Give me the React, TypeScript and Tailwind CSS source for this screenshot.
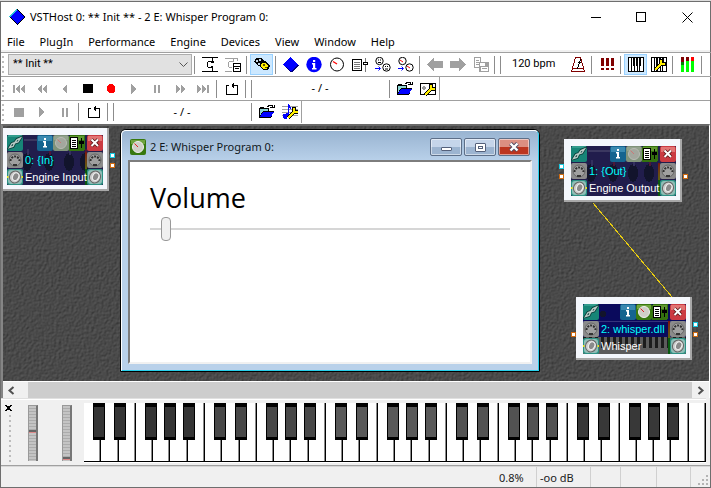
import React from "react";

type Kids = { children?: React.ReactNode };

/* ---------- pixel icons, 16 x 16 ---------- */

function Px({ children, smooth = false }: Kids & { smooth?: boolean }) {
  return (
    <svg
      width="16"
      height="16"
      viewBox="0 0 16 16"
      fill="none"
      stroke="none"
      shapeRendering={smooth ? "auto" : "crispEdges"}
      aria-hidden="true"
      className="block shrink-0"
    >
      {children}
    </svg>
  );
}

const GREY = "#a0a0a0";

const Diamond = () => (
  <Px>
    <path d="M8 0L16 8L8 16L0 8Z" fill="#000" />
    <path d="M8 1L15 8L8 15L1 8Z" fill="#0000ff" />
    <path d="M8 .5L.5 8" stroke="#27c4d8" />
  </Px>
);

const ToolDiamond = () => (
  <Px>
    <path d="M8 1L16 8L9 15H8L0 8Z" fill="#000080" />
    <path d="M8 0L15 7.500L8 14L0 7.500Z" fill="#0000ff" />
  </Px>
);

const Plug = () => (
  <Px>
    <path d="M0 .5H16M0 14.500H16M10.500 0V5M10.500 10V15M6 4.500H10M5.500 5V10M6 10.500H10M11.500 4V6M9 5.500H12M9 9.500H11" stroke="#000" />
  </Px>
);

const PlugCard = () => (
  <Px>
    <path d="M0 1.500H12M0 14.500H7M8.500 1V4M4 4.500H9M3.500 5V10M4 10.500H7M12.500 1V4" stroke={GREY} />
    <path d="M8 6H16V15H8Z" fill="#000" />
    <path d="M9 7H15V9H9ZM9 10H15V14H9Z" fill="#fff" />
    <path d="M10 11H14V12H10Z" fill="#000" />
  </Px>
);

const Engine = () => (
  <Px>
    <path d="M2 1H7L10 4L8 8L4 9L0 5Z" fill="#000" />
    <path d="M2 3H4V5H2ZM5 2H7V4H5ZM4 6H6V8H4Z" fill="#c8dcee" />
    <path d="M8 4H12L16 9L14 13H9L5 9Z" fill="#000" />
    <path d="M8 6H11L14 9L13 12H9L7 9Z" fill="#ffee00" />
    <path d="M9 7H11V9H9ZM11 10H13V11H11Z" fill="#5a5200" />
  </Px>
);

const Info = () => (
  <Px smooth>
    <circle cx="8" cy="7.500" r="7.700" fill="#0000ff" />
    <path d="M7 3H9.200V5H7ZM6 6H9.200V11H10.500V12.500H6V11H7V7.500H6Z" fill="#fff" />
  </Px>
);

const Dial = () => (
  <Px smooth>
    <circle cx="8" cy="7.500" r="6.500" fill="#fff" stroke="#000" />
    <path d="M4 4.500L8 7" stroke="#ff0000" strokeWidth="1.300" />
  </Px>
);

const ListSlider = () => (
  <Px>
    <path d="M.5 2.500H9.500V13.500H.5Z" fill="#fff" stroke="#000" />
    <path d="M2 5.500H8M2 7.500H8M2 9.500H8M2 11.500H8" stroke="#777" />
    <path d="M13.500 1V15" stroke="#777" />
    <path d="M11 5H16V8H11Z" fill="#000" />
    <path d="M12 6H15V7H12Z" fill="#fff" />
  </Px>
);

const Midi = ({ red = false }: { red?: boolean }) => (
  <Px smooth>
    <circle cx="4.500" cy="4" r="3.700" fill="#fff" stroke="#000" />
    <circle cx="11.500" cy="10.500" r="3.700" fill="#fff" stroke="#000" />
    {red ? (
      <path d="M2 3L5 5M9 9L12 11" stroke="#f00" />
    ) : (
      <path d="M3 3H4M5 3H6M3 5.500H6M10 9.500H11M12 9.500H13M10 12H13" stroke="#000" />
    )}
    <path d="M0 11.500H5M3.500 9.500L5.500 11.500L3.500 13.500" stroke="#0000ff" />
  </Px>
);

const Arrow = ({ right = false }: { right?: boolean }) => (
  <Px>
    <path
      d={right ? "M16 7.500L9 0V4H0V11H9V15Z" : "M0 7.500L7 0V4H16V11H7V15Z"}
      fill={GREY}
    />
  </Px>
);

const Copy = () => (
  <Px>
    <path d="M1.500 .5H7.500V10.500H1.500ZM3 3.500H6M3 5.500H6M3 7.500H6" stroke={GREY} />
    <path d="M6 5H16V15H6Z" fill={GREY} />
    <path d="M7 6H12V9H7ZM8 10H15V14H8Z" fill="#fff" />
    <path d="M9 11.500H14" stroke={GREY} />
  </Px>
);

const Metronome = () => (
  <Px>
    <path d="M5.500 .5H10.500L14.500 14.500H1.500ZM2 11.500H14" stroke="#800000" />
    <path d="M10.500 2L7.500 12M8 5H11" stroke="#000" />
  </Px>
);

const Panic = () => (
  <Px>
    <path d="M2 1H5V9H2ZM7 1H10V9H7ZM12 1H15V9H12ZM2 11H5V13H2ZM7 11H10V13H7ZM12 11H15V13H12Z" fill="#800000" />
  </Px>
);

const Wrench = ({ move }: { move?: string }) => (
  <g transform={move}>
    <path d="M4 13L10 7M10 2V7H15" stroke="#000" strokeWidth="4" />
    <path d="M4 13L10 7M10 3V7H14" stroke="#ffee00" strokeWidth="2" />
  </g>
);

const Keys = ({ wrench = false }: { wrench?: boolean }) => (
  <Px>
    <path d="M0 0H16V15H0Z" fill="#000" />
    <path d="M1 1H3V14H1ZM4 9H6V14H4ZM4 1H5V9H4ZM7 1H8V9H7ZM7 9H9V14H7ZM10 1H11V14H10ZM12 9H13V14H12ZM13 1H15V14H13Z" fill="#fff" />
    {wrench && <Wrench />}
  </Px>
);

const Meters = () => (
  <Px>
    <path d="M1 0H4V5H1ZM6 0H9V4H6Z" fill="#800000" />
    <path d="M11 0H14V4H11Z" fill="#ff0000" />
    <path d="M1 5H4V8H1Z" fill="#008000" />
    <path d="M1 8H4V15H1ZM6 4H9V15H6ZM11 4H14V15H11Z" fill="#00ff00" />
  </Px>
);

const Shape = ({ d, fill = GREY }: { d: string; fill?: string }) => (
  <Px>
    <path d={d} fill={fill} />
  </Px>
);

const Loop = () => (
  <Px>
    <path d="M5 4.500H2.500V13.500H13.500V4.500H8M9.500 2V7M8.500 3V6" stroke="#000" />
  </Px>
);

const Folder = () => (
  <Px>
    <path d="M0 14V4H1V3H5V4H10V7H15L12 14Z" fill="#000" />
    <path d="M1 12V5H9V7H4Z" fill="#8fd6d6" />
    <path d="M4 8H15L12 13H1Z" fill="#0000ff" />
    <path d="M8 2.500H9V1.500H13V3.500M11 3.500H15V1" stroke="#000" />
  </Px>
);

const PanelWrench = () => (
  <Px>
    <path d="M.5 2.500H15.500V13.500H.5Z" fill="#fff" stroke="#000" />
    <path d="M2 6H6V8H2ZM3 5H5V9H3Z" fill="#999" />
    <Wrench move="translate(1 1)" />
  </Px>
);

const NoteWrench = () => (
  <Px>
    <path d="M0 2.500H16M0 5.500H16M0 8.500H16M0 11.500H16" stroke={GREY} />
    <path d="M6 0H7L9 4V6L7 4V13H5V15H2V14H1V10H4V9H6Z" fill="#0000ff" />
    <Wrench move="translate(2 1)" />
  </Px>
);

/* ---------- toolbar parts ---------- */

function Tool({ label, on = false, children }: Kids & { label: string; on?: boolean }) {
  return (
    <button
      type="button"
      aria-label={label}
      className={
        on
          ? "flex h-[21px] w-[23px] shrink-0 items-center justify-center border border-[#99d1ff] bg-[#cce8ff]"
          : "flex h-[21px] w-[23px] shrink-0 items-center justify-center"
      }
    >
      {children}
    </button>
  );
}

const Sep = () => <span className="mr-[3px] ml-0.5 h-[18px] w-px shrink-0 bg-[#8c8c8c]" />;

function Grip({ count, tall = false }: { count: number; tall?: boolean }) {
  return (
    <span className={tall ? "flex flex-col gap-[3px]" : "mr-0.5 flex w-[3px] shrink-0 flex-col gap-[3px]"}>
      {Array.from({ length: count }, (_, i) => (
        <i key={i} className="size-0.5 bg-[#bdbdbd]" />
      ))}
    </span>
  );
}

const bar = "flex h-6 w-full items-center overflow-hidden border-b border-[#a0a0a0] pl-px";
const uiText = "font-['Noto_Sans','Open_Sans',sans-serif]";
const barText = "font-['Roboto',sans-serif]";

/* ---------- engine nodes ---------- */

const Link = () => (
  <Px smooth>
    <rect width="16" height="16" rx="2" fill="#178577" />
    <path d="M1 1H15" stroke="#4fb3a3" />
    <path d="M2.500 12.500L5 8.500L8 7.500L6 11.500ZM7.500 8L10 4.500L13.500 3L11 7Z" stroke="#083d38" strokeWidth="3" />
    <path d="M2.500 12.500L5 8.500L8 7.500L6 11.500ZM7.500 8L10 4.500L13.500 3L11 7Z" stroke="#b9cbc7" strokeWidth="1.400" />
  </Px>
);

const NodeInfo = () => (
  <Px smooth>
    <rect width="16" height="16" rx="2" fill="#14648f" />
    <path d="M1 1H15V6H1Z" fill="#3989b0" />
    <path d="M7 3H9V5H7ZM6 6H9V11H10V12.500H6V11H7V7.500H6Z" fill="#fff" />
  </Px>
);

const NodeDial = ({ lit = false }: { lit?: boolean }) => (
  <Px smooth>
    <rect width="16" height="16" rx="2" fill={lit ? "#37780e" : "#7f927a"} />
    <path d="M1 1H15V5H1Z" fill={lit ? "#6fa33f" : "#93a38e"} />
    <circle cx="8" cy="8" r="5.500" fill={lit ? "#cfcfc6" : "#a3a79e"} stroke={lit ? "#f0f0f0" : "#b8bcb4"} />
    <path d="M4.500 4.500L8 8" stroke={lit ? "#e02020" : "#c77"} />
  </Px>
);

const NodeList = () => (
  <Px>
    <rect width="16" height="16" rx="2" fill="#34720f" />
    <path d="M1 1H15V5H1Z" fill="#5f9830" />
    <path d="M1.500 2.500H8.500V13.500H1.500Z" fill="#fff" stroke="#000" />
    <path d="M3 5.500H7M3 7.500H7M3 9.500H7M3 11.500H7" stroke="#000" />
    <path d="M12.500 3V13" stroke="#000" />
    <path d="M10 6H15V9H10Z" fill="#000" />
  </Px>
);

const NodeClose = () => (
  <Px smooth>
    <rect width="16" height="16" rx="2" fill="#cb3b42" />
    <path d="M1 1H15V6H1Z" fill="#e27474" />
    <path d="M4.500 4.500L11 11M11 4.500L4.500 11" stroke="#501010" strokeWidth="3.500" />
    <path d="M4.500 4.500L11 11M11 4.500L4.500 11" stroke="#fff" strokeWidth="2" />
  </Px>
);

const Socket = () => (
  <Px smooth>
    <rect width="16" height="16" rx="2" fill="#8b8b8b" />
    <circle cx="8" cy="8" r="6" fill="#a0a0a0" stroke="#666" />
    <path d="M3.500 9A4.500 4.500 0 0 1 12.500 9" stroke="#303030" strokeWidth="2" strokeDasharray="2 1" />
    <path d="M6 13H10" stroke="#333" strokeWidth="2" />
  </Px>
);

const Speaker = ({ left = false }: { left?: boolean }) => (
  <Px smooth>
    <rect width="16" height="16" rx="2" fill="#2c9184" />
    <rect x="1" y="1" width="14" height="14" rx="3" fill="#8fbdb6" />
    <ellipse cx="8" cy="8" rx="5.500" ry="6" transform="rotate(25 8 8)" fill="#cdcdcd" stroke="#666" />
    <ellipse cx="8.500" cy="7.500" rx="3" ry="4" transform="rotate(25 8 8)" fill="#8a8a8a" stroke="#f2f2f2" />
    {left && <path d="M0 7H1.500V9H0ZM14.500 7H16V9H14.500Z" fill="#e8e020" />}
  </Px>
);

const Backdrop = ({ piano = false }: { piano?: boolean }) => (
  <svg className="absolute inset-0 size-full" aria-hidden="true" shapeRendering="crispEdges">
    <rect width="100%" height="100%" fill={piano ? "#0a0a5c" : "#211d4c"} />
    {[20, 42, 62, 78].map((x, i) => (
      <g key={x}>
        <ellipse cx={x} cy={piano ? 10 : 27} rx={piano ? 3 : 5} ry={piano ? 3 : 9} fill="#12142c" />
        {!piano && <rect x={x} y="14" width="2" height="6" fill={i % 2 ? "#4d1838" : "#34305e"} />}
      </g>
    ))}
    {piano ? (
      <g>
        <rect y="17" width="100%" height="1" fill="#34347c" />
        <rect y="33" width="100%" height="17" fill="#5c5c5c" />
        {Array.from({ length: 18 }, (_, i) => (
          <rect key={i} x={i * 6} y="33" width="3" height="11" fill="#1c1c1c" />
        ))}
      </g>
    ) : (
      <rect x="17" y="4" width="22" height="2" fill="#3b3860" />
    )}
  </svg>
);

type NodeProps = { title: string; name: string; place: string; piano?: boolean };

function EngineNode({ title, name, place, piano = false }: NodeProps) {
  return (
    <section
      className={`absolute h-[63px] border-r-2 border-b-2 border-[#a8a8a8] bg-[#f4f7fc] pt-[7px] pr-1 pb-1 ${place}`}
    >
      <div className="relative h-[50px] overflow-hidden">
        <Backdrop piano={piano} />
        <div className="relative flex flex-col gap-px">
          <div className="flex">
            <button type="button" aria-label="Link" className="mr-auto"><Link /></button>
            <button type="button" aria-label="Information"><NodeInfo /></button>
            <button type="button" aria-label="Editor"><NodeDial lit={piano} /></button>
            <button type="button" aria-label="Parameters" className="mr-0.5"><NodeList /></button>
            <button type="button" aria-label="Remove"><NodeClose /></button>
          </div>
          {[title, name].map((text, row) => (
            <div key={text} className="flex h-4 items-center">
              {row ? <Speaker left /> : <Socket />}
              <span
                className={`z-10 min-w-0 flex-1 pl-0.5 font-['Liberation_Sans',Arial,sans-serif] text-[11px] leading-4 whitespace-nowrap ${
                  row ? "text-white" : "text-[#00ffff]"
                }`}
              >
                {text}
              </span>
              <i
                className={`h-[17px] w-0.5 shrink-0 ${
                  row ? "bg-[#0a5a10]" : "bg-linear-to-b from-[#7a1010] to-[#5a6010]"
                }`}
              />
              {row ? <Speaker /> : <Socket />}
            </div>
          ))}
        </div>
      </div>
    </section>
  );
}

const Pin = ({ place, audio = false }: { place: string; audio?: boolean }) => (
  <i
    className={`absolute size-[5px] border bg-white ${
      audio ? "border-[#d06a10]" : "border-[#18c8e0]"
    } ${place}`}
  />
);

/* ---------- plug-in editor window ---------- */

const caption =
  "flex h-[18px] w-8 items-center justify-center rounded-xs border border-[#5d6f88] inset-ring inset-ring-white/50";

function EditorWindow() {
  return (
    <section className="absolute top-[3px] left-[117px] flex h-[243px] w-[420px] flex-col rounded-t-md border border-black bg-[#b9d1ea]">
      <div className="flex flex-1 flex-col rounded-t-[5px] border border-t-white border-r-[#28d0ec] border-b-[#28d0ec] border-l-white bg-linear-to-b from-[#99b4d1] to-[#b9d1ea] to-[30px] px-1.5 pb-1.5">
        <header className="flex h-[29px] items-center gap-1 px-0.5 pt-[3px]">
          <NodeDial lit />
          <h2 className={`flex-1 text-[11px] ${uiText} text-[#101820]`}>2 E: Whisper Program 0:</h2>
          <div className="flex gap-0.5">
            <button type="button" aria-label="Minimize" className={`${caption} bg-linear-to-b from-[#c5d5ea] from-50% to-[#9cb4d0] to-50%`}>
              <i className="mt-1 h-1 w-[11px] rounded-[1px] border border-[#54607a] bg-white" />
            </button>
            <button type="button" aria-label="Maximize" className={`${caption} bg-linear-to-b from-[#c5d5ea] from-50% to-[#9cb4d0] to-50%`}>
              <i className="flex h-[9px] w-[11px] items-center justify-center rounded-[1px] border border-[#54607a] bg-white">
                <i className="h-[3px] w-[5px] border border-[#54607a]" />
              </i>
            </button>
            <button type="button" aria-label="Close" className={`${caption} border-[#4a1018] bg-linear-to-b from-[#dc8f82] from-50% to-[#bc3520] to-50%`}>
              <svg width="12" height="10" viewBox="0 0 12 10" aria-hidden="true">
                <path d="M2.500 1.500L9.500 8.500M9.500 1.500L2.500 8.500" stroke="#4c4a62" strokeWidth="4" />
                <path d="M2.500 1.500L9.500 8.500M9.500 1.500L2.500 8.500" stroke="#fff" strokeWidth="2.400" />
              </svg>
            </button>
          </div>
        </header>
        <div className="flex-1 border-2 border-t-[#7d7d7d] border-r-[#f1f1f1] border-b-[#f1f1f1] border-l-[#7d7d7d] bg-white px-5 pt-[18px]">
          <label htmlFor="volume" className="block font-['Open_Sans','Noto_Sans',sans-serif] text-[27px] leading-9 text-black">
            Volume
          </label>
          <input
            id="volume"
            type="range"
            defaultValue={3}
            className="mt-px block h-6 w-full appearance-none bg-transparent [&::-webkit-slider-runnable-track]:h-0.5 [&::-webkit-slider-runnable-track]:bg-[#d6d6d6] [&::-webkit-slider-thumb]:-mt-[11px] [&::-webkit-slider-thumb]:h-6 [&::-webkit-slider-thumb]:w-2.5 [&::-webkit-slider-thumb]:appearance-none [&::-webkit-slider-thumb]:rounded [&::-webkit-slider-thumb]:border [&::-webkit-slider-thumb]:border-[#999] [&::-webkit-slider-thumb]:bg-[#f0f0f0]"
          />
        </div>
      </div>
    </section>
  );
}

/* ---------- keyboard ---------- */

const blackPlaces = ["left-[7.5%]", "left-[24.8%]", "left-[50.4%]", "left-[66.1%]", "left-[81.8%]"];
const blackTones = ["bg-[#353535]", "bg-[#484848]", "bg-[#595959]", "bg-[#525252]", "bg-[#383838]"];

const White = () => (
  <button
    type="button"
    aria-label="White key"
    className="h-[59px] flex-1 border-r border-b border-black bg-white shadow-[inset_-1px_0_#8a8a8a]"
  />
);

function Piano() {
  return (
    <div className="flex h-[60px] flex-1 bg-white">
      {blackTones.map((tone, o) => (
        <div key={o} className="relative flex flex-[7]">
          {Array.from({ length: 7 }, (_, k) => <White key={k} />)}
          {blackPlaces.map((place) => (
            <button
              key={place}
              type="button"
              aria-label="Black key"
              className={`absolute top-0 h-[37px] w-3 border-x border-t-4 border-b-3 border-black ${place} ${tone}`}
            />
          ))}
        </div>
      ))}
      <div className="flex flex-1"><White /></div>
    </div>
  );
}

const Wheel = ({ low = false }: { low?: boolean }) => (
  <span className="h-14 w-2.5 border-t border-r-2 border-l border-[#999] border-r-[#777] bg-[repeating-linear-gradient(#c4c4c4_0_2px,#acacac_2px_3px)]">
    <i className={`block h-[3px] border-b border-[#d88] bg-[#666] ${low ? "mt-[51px]" : "mt-6"}`} />
  </span>
);

/* ---------- application ---------- */

const menus = ["File", "PlugIn", "Performance", "Engine", "Devices", "View", "Window", "Help"];

const transport: [string, string, string?][] = [
  ["First", "M2 4H4V12H2ZM9 4V12L4 8ZM14 4V12L9 8Z"],
  ["Rewind", "M8 4V12L3 8ZM13 4V12L8 8Z"],
  ["Back", "M10 4V12L5 8Z"],
  ["Stop", "M3 3H13V12H3Z", "#000"],
  ["Record", "M6 3H10L12 6V10L10 12H6L4 10V6Z", "#ff0000"],
  ["Play", "M5 3V13L11 8Z"],
  ["Pause", "M5 4H7V12H5ZM9 4H11V12H9Z"],
  ["Forward", "M4 4V12L9 8ZM9 4V12L14 8Z"],
  ["Last", "M2 4V12L7 8ZM7 4V12L12 8ZM12 4H14V12H12Z"],
];

export default function App() {
  return (
    <main className={`flex h-screen min-h-[420px] flex-col overflow-hidden border-t border-[#dcdcdc] text-[11px] text-black ${uiText}`}>
      <div className="flex min-h-0 flex-1 flex-col border border-[#6e6e6e] bg-[#f0f0f0]">
        <header className="flex h-[30px] shrink-0 items-center bg-white pl-2">
          <Diamond />
          <h1 className="ml-[5px] flex-1 whitespace-nowrap">VSTHost 0: ** Init ** - 2 E: Whisper Program 0:</h1>
          {["M.5 5.500H10.500", "M.5 .5H9.500V9.500H.5Z", "M.5 .5L10.500 10.500M10.500 .5L.5 10.500"].map((d, i) => (
            <button key={d} type="button" aria-label={["Minimize", "Maximize", "Close"][i]} className="flex h-full w-[46px] items-center justify-center">
              <svg width="11" height="11" viewBox="0 0 11 11" fill="none" stroke="#000" shapeRendering={i < 2 ? "crispEdges" : "auto"} aria-hidden="true">
                <path d={d} />
              </svg>
            </button>
          ))}
        </header>
        <nav className="flex h-[18px] shrink-0 items-center gap-[15px] bg-white pt-0.5 pl-1.5">
          {menus.map((m) => <button key={m} type="button">{m}</button>)}
        </nav>
        <div className="shrink-0 border-t-2 border-[#f0f0f0] bg-white pb-px">
          <div className={`${bar} box-content h-[23px] border-t`}>
            <Grip count={4} />
            <div className="relative ml-px h-[21px] w-[184px] shrink-0">
              <select aria-label="Performance" className={`h-full w-full appearance-none border border-[#adadad] bg-[#e1e1e1] pl-1 text-[11px] ${barText}`}>
                <option>** Init **</option>
              </select>
              <svg className="pointer-events-none absolute top-2 right-1" width="9" height="6" viewBox="0 0 9 6" fill="none" aria-hidden="true">
                <path d="M.5 .5L4.500 4.500L8.500 .5" stroke="#555" />
              </svg>
            </div>
            <Sep />
            <Tool label="Load plug-in"><Plug /></Tool>
            <Tool label="Plug-in window"><PlugCard /></Tool>
            <Sep />
            <Tool label="Engine running" on><Engine /></Tool>
            <Sep />
            <Tool label="Plug-in"><ToolDiamond /></Tool>
            <Tool label="Information"><Info /></Tool>
            <Tool label="Edit"><Dial /></Tool>
            <Tool label="Parameters"><ListSlider /></Tool>
            <Tool label="MIDI devices"><Midi /></Tool>
            <Tool label="MIDI parameters"><Midi red /></Tool>
            <Sep />
            <Tool label="Previous"><Arrow /></Tool>
            <Tool label="Next"><Arrow right /></Tool>
            <Tool label="Copy"><Copy /></Tool>
            <Sep />
            <Sep />
            <span className={`w-[62px] shrink-0 pl-2 whitespace-nowrap ${barText}`}>120 bpm</span>
            <Tool label="Metronome"><Metronome /></Tool>
            <Sep />
            <Tool label="Panic"><Panic /></Tool>
            <Sep />
            <Tool label="Keyboard" on><Keys /></Tool>
            <Tool label="Keyboard settings"><Keys wrench /></Tool>
            <Sep />
            <Tool label="Levels"><Meters /></Tool>
            <Sep />
          </div>
          <div className={bar}>
            <Grip count={4} />
            {transport.map(([label, d, fill]) => (
              <Tool key={label} label={label}><Shape d={d} fill={fill} /></Tool>
            ))}
            <Sep />
            <Tool label="Loop"><Loop /></Tool>
            <Sep />
            <Sep />
            <span className={`w-[132px] shrink-0 pr-0.5 text-center`}>- / -</span>
            <Sep />
            <Tool label="Open recording"><Folder /></Tool>
            <Tool label="Recorder settings"><PanelWrench /></Tool>
            <span className="h-full w-px shrink-0 bg-[#a0a0a0]" />
          </div>
          <div className="flex h-[22px] items-center pl-px">
            <Grip count={4} />
            <Tool label="Stop"><Shape d="M3 4H13V13H3Z" /></Tool>
            <Tool label="Play"><Shape d="M5 3V13L11 8Z" /></Tool>
            <Tool label="Pause"><Shape d="M5 4H7V13H5ZM9 4H11V13H9Z" /></Tool>
            <Sep />
            <Tool label="Loop"><Loop /></Tool>
            <Sep />
            <Sep />
            <span className={`w-[132px] shrink-0 pr-0.5 text-center`}>- / -</span>
            <Sep />
            <Tool label="Open MIDI file"><Folder /></Tool>
            <Tool label="MIDI player settings"><NoteWrench /></Tool>
            <span className="h-full w-px shrink-0 bg-[#a0a0a0]" />
          </div>
        </div>

        <div className="flex min-h-0 flex-1 flex-col border-t-2 border-r border-l-2 border-t-[#696969] border-r-white border-l-[#858585]">
          <div className="relative min-h-0 flex-1 overflow-hidden bg-[#484848]">
            <svg className="absolute inset-0 size-full" aria-hidden="true">
              <filter id="stone" x="0" y="0" width="100%" height="100%" colorInterpolationFilters="sRGB">
                <feTurbulence type="fractalNoise" baseFrequency=".4" numOctaves="3" seed="4" />
                <feDiffuseLighting surfaceScale=".6" lightingColor="#606060">
                  <feDistantLight azimuth="225" elevation="50" />
                </feDiffuseLighting>
              </filter>
              <rect width="100%" height="100%" filter="url(#stone)" />
              <path d="M590 77L669 171" stroke="#e8cc10" shapeRendering="crispEdges" />
            </svg>
            <EngineNode title="0: {In}" name="Engine Input" place="top-0.5 left-0 w-[106px] pl-1" />
            <Pin place="top-[27px] left-[107px]" />
            <Pin audio place="top-[37px] left-[107px]" />
            <EngineNode title="1: {Out}" name="Engine Output" place="top-[13px] left-[561px] w-[118px] pl-[7px]" />
            <Pin place="top-[38px] left-[556px]" />
            <Pin audio place="top-12 left-[556px]" />
            <Pin audio place="top-12 left-[680px]" />
            <EngineNode title="2: whisper.dll" name="Whisper" place="top-[171px] left-[573px] w-[116px] pl-[7px]" piano />
            <Pin audio place="top-[206px] left-[568px]" />
            <Pin place="top-[196px] left-[690px]" />
            <Pin audio place="top-[206px] left-[690px]" />
            <EditorWindow />
          </div>
          <div className="flex h-[17px] shrink-0 items-center border-t border-white bg-[#f0f0f0]">
            {["M6.500 1L2.500 4.500L6.500 8", "M2.500 1L6.500 4.500L2.500 8"].map((d, i) => (
              <React.Fragment key={d}>
                {i === 1 && <span className="h-full flex-1 bg-[#cdcdcd]" />}
                <button type="button" aria-label={i ? "Scroll right" : "Scroll left"} className={i ? "flex w-[17px] justify-center" : "flex w-[25px] pl-1"}>
                  <svg width="9" height="9" viewBox="0 0 9 9" fill="none" stroke="#505050" strokeWidth="2" aria-hidden="true">
                    <path d={d} />
                  </svg>
                </button>
              </React.Fragment>
            ))}
          </div>
        </div>

        <div className="flex h-[68px] shrink-0 items-start border-b border-[#a0a0a0] pr-1">
          <div className="h-full flex-1 border-t border-[#e0e0e0]">
            <div className="flex items-start border-t border-white pt-[3px]">
              <div className="flex w-[27px] flex-col gap-1 pt-0.5 pl-1">
                <button type="button" aria-label="Close keyboard">
                  <svg width="7" height="6" viewBox="0 0 7 6" shapeRendering="crispEdges" aria-hidden="true">
                    <path d="M0 0H2V1H5V0H7V1H6V2H5V4H6V5H7V6H5V5H2V6H0V5H1V4H2V2H1V1H0Z" fill="#000" />
                  </svg>
                </button>
                <span className="pl-1"><Grip count={10} tall /></span>
              </div>
              <div className="flex w-14 gap-6 pt-0.5">
                <Wheel />
                <Wheel low />
              </div>
              <Piano />
            </div>
          </div>
        </div>

        <footer className="flex h-[21px] shrink-0 items-center justify-end border-t border-[#d8d8d8] text-[#202020]">
          <span className="flex h-full w-[46px] items-center border-r border-[#d0d0d0] pt-0.5 pl-2">0.8%</span>
          <span className="flex h-full w-[54px] items-center border-r border-[#d0d0d0] pt-0.5 pl-[3px]">-oo dB</span>
          <span className="h-full w-[30px] border-r border-[#d0d0d0]" />
          <span className="h-full w-9 border-r border-[#d0d0d0]" />
          <span className="h-full w-[34px] border-r border-[#d0d0d0]" />
          <svg width="19" height="19" viewBox="0 0 19 19" fill="#b4b4b4" aria-hidden="true">
            <path d="M15 7h2v2h-2zM11 11h2v2h-2zM15 11h2v2h-2zM7 15h2v2H7zM11 15h2v2h-2zM15 15h2v2h-2z" />
          </svg>
        </footer>
      </div>
    </main>
  );
}
